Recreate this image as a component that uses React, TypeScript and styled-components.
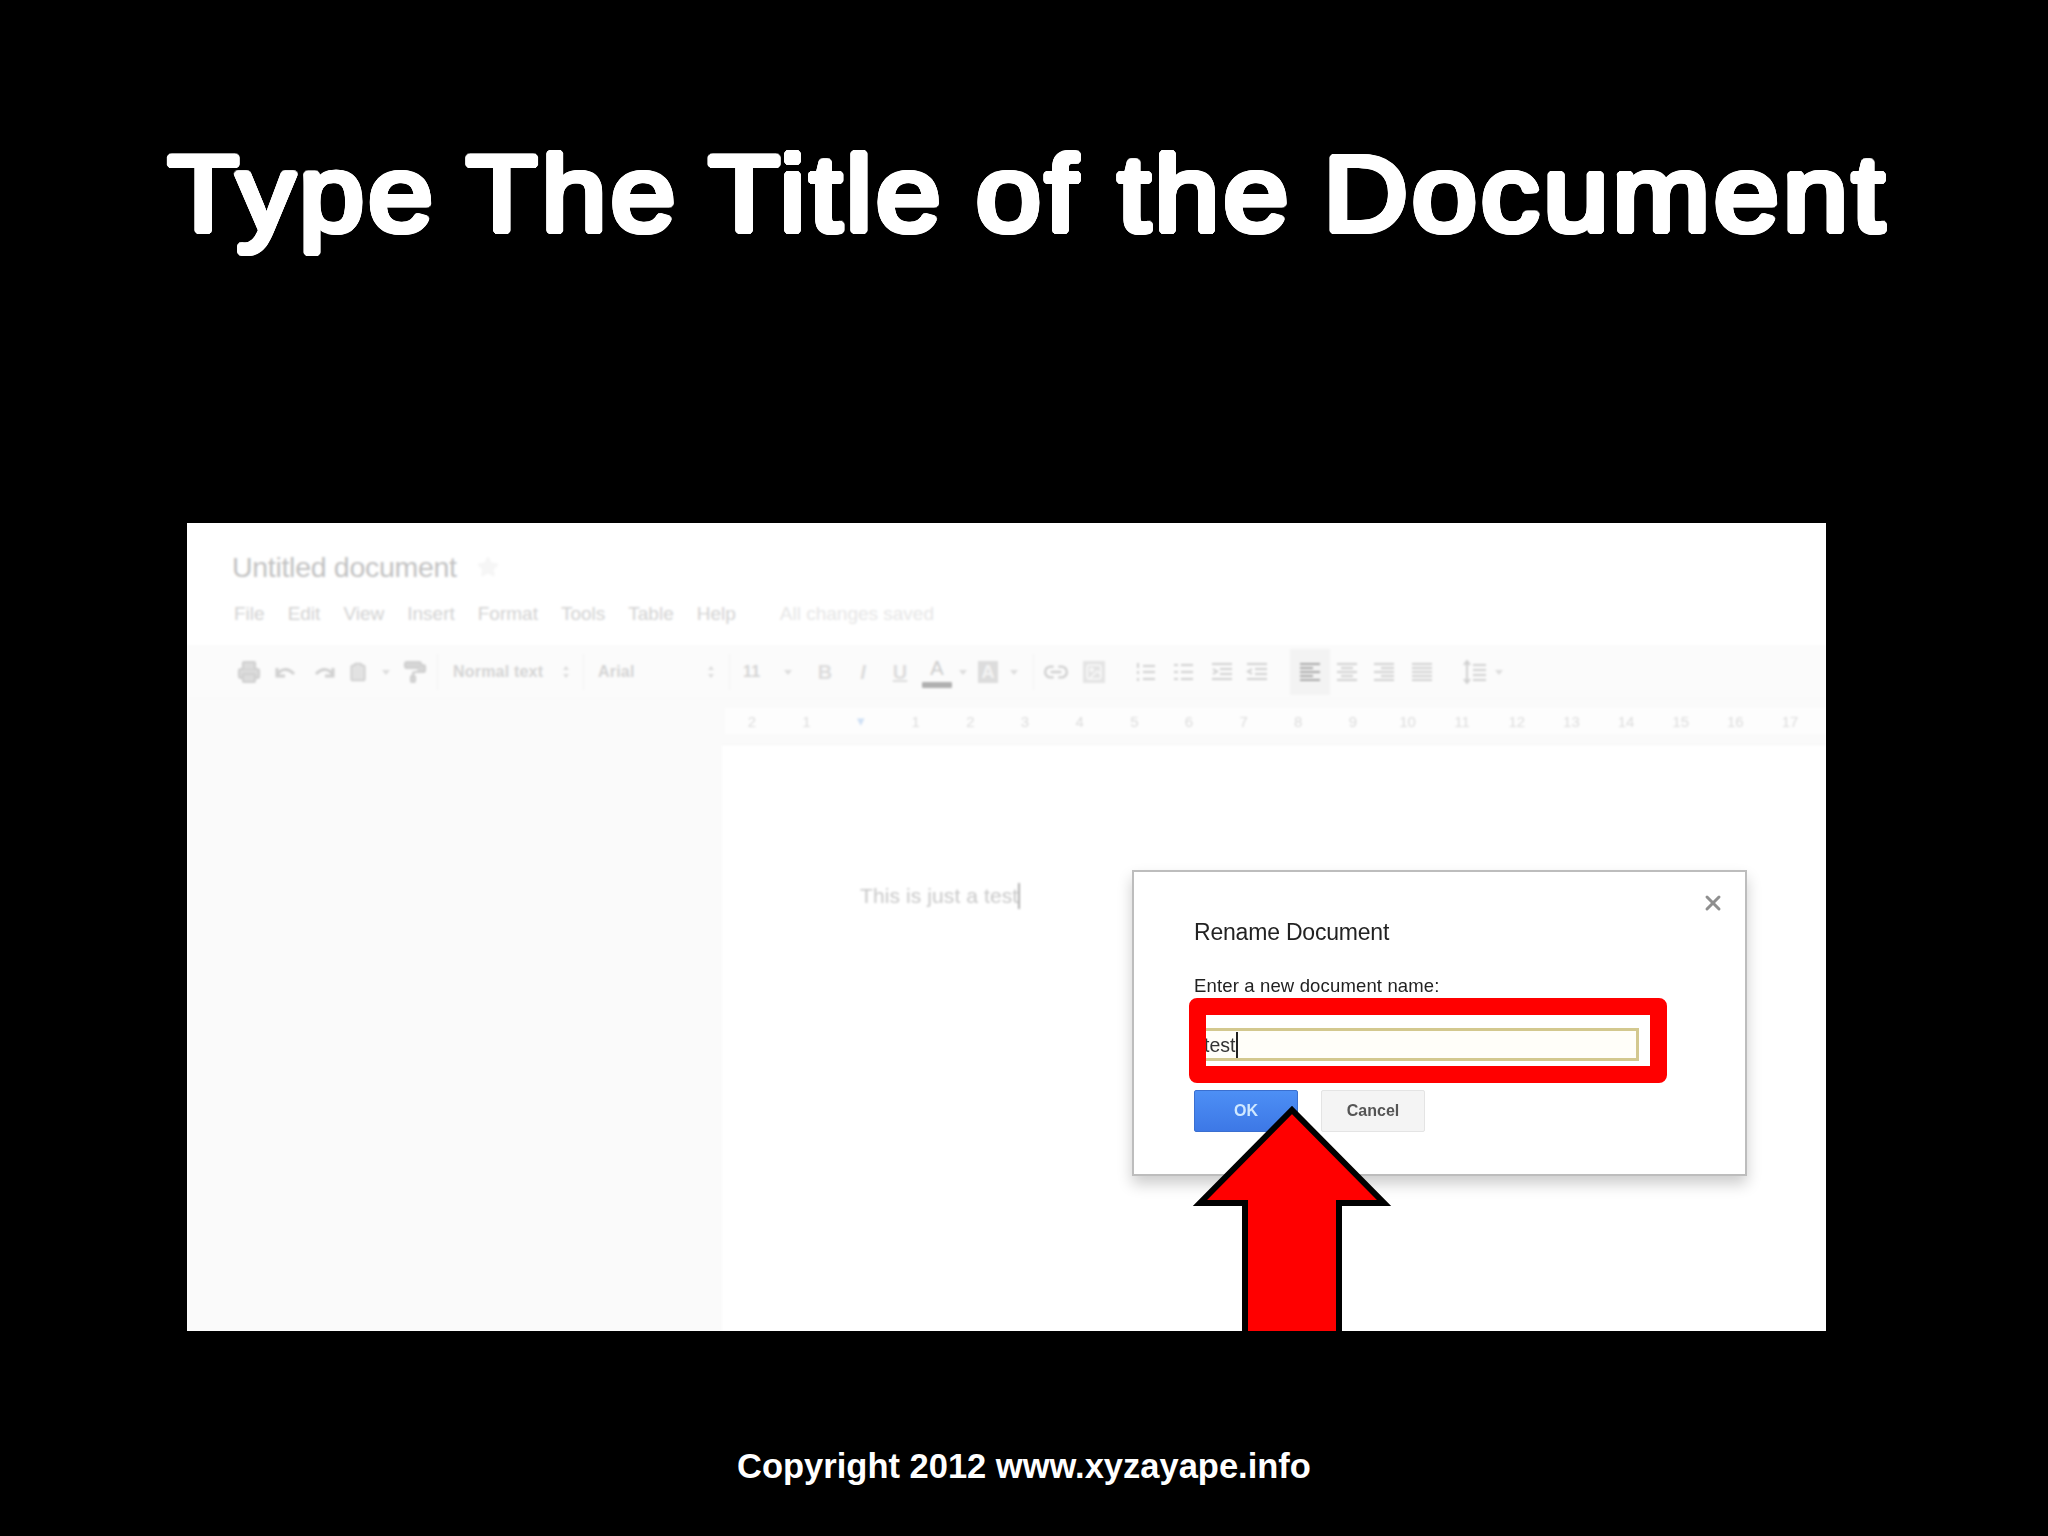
import React from "react";
import styled, { createGlobalStyle } from "styled-components";
import { Printer, Clipboard, PaintRoller, Link2, Image, Star, X } from "lucide-react";

const GlobalStyle = createGlobalStyle`
  html, body {
    margin: 0;
    padding: 0;
    background: #000;
  }
`;

const Slide = styled.div`
  width: 2048px;
  height: 1536px;
  background: #000;
  display: flex;
  flex-direction: column;
  font-family: "Liberation Sans", Arial, sans-serif;
  overflow: hidden;
`;

const TitleArea = styled.div`
  height: 523px;
  padding: 132px 0 0 8px;
  box-sizing: border-box;
  text-align: center;
`;

const roundShadow = Array.from({ length: 16 }, (_, i) => {
  const a = (i / 16) * Math.PI * 2;
  return `${(Math.cos(a) * 3).toFixed(2)}px ${(Math.sin(a) * 3).toFixed(2)}px 0 #fff`;
}).join(", ");

const Title = styled.h1`
  margin: 0;
  font-size: 107px;
  line-height: 124px;
  font-weight: 400;
  color: #fff;
  letter-spacing: 3.6px;
  word-spacing: -5px;
  white-space: nowrap;
  text-shadow: ${roundShadow};
  transform: scaleX(1.094);
`;

const WideWord = styled.span`
  margin-right: 5px;
`;

const Shot = styled.div`
  position: relative;
  margin-left: 187px;
  width: 1639px;
  height: 808px;
  background: #fff;
  overflow: hidden;
`;

const DocLayer = styled.div`
  height: 100%;
  display: flex;
  flex-direction: column;
  filter: blur(0.9px);
`;

const DocHeader = styled.div`
  height: 122px;
  box-sizing: border-box;
  padding: 28px 0 0 45px;
  background: #fff;
`;

const DocTitleRow = styled.div`
  display: flex;
  align-items: center;
  gap: 20px;
  height: 32px;
`;

const DocTitle = styled.div`
  font-size: 28.5px;
  letter-spacing: -0.3px;
  color: #c2c2c2;
`;

const MenuRow = styled.div`
  display: flex;
  align-items: center;
  gap: 23px;
  margin-top: 18px;
  margin-left: 2px;
  height: 26px;
  font-size: 19px;
  color: #d2d2d2;
`;

const SavedNote = styled.span`
  margin-left: 21px;
  color: #e6e6e6;
`;

const Toolbar = styled.div`
  height: 52px;
  box-sizing: border-box;
  padding: 2px 0 0 50px;
  display: flex;
  align-items: center;
  background: #fbfbfb;
  color: #d0d0d0;
`;

const Tool = styled.div<{ $w?: number; $ml?: number; $active?: boolean }>`
  flex: none;
  width: ${(p) => p.$w ?? 24}px;
  height: ${(p) => (p.$active ? 46 : 26)}px;
  margin-left: ${(p) => p.$ml ?? 0}px;
  display: flex;
  align-items: center;
  justify-content: center;
  background: ${(p) => (p.$active ? "#f3f3f3" : "transparent")};
  color: ${(p) => (p.$active ? "#a8a8a8" : "inherit")};
  white-space: nowrap;
`;

const ToolSep = styled.div<{ $ml: number }>`
  flex: none;
  width: 1px;
  height: 36px;
  margin-left: ${(p) => p.$ml}px;
  background: #f2f2f2;
`;

const ToolText = styled(Tool)`
  justify-content: flex-start;
  font-size: 16px;
  letter-spacing: 0.2px;
  font-weight: 700;
  color: #d4d4d4;
`;

const Caret = styled(Tool)`
  font-size: 0;
  &::after {
    content: "";
    border-left: 4px solid transparent;
    border-right: 4px solid transparent;
    border-top: 5px solid #dcdcdc;
  }
`;

const Spinner = styled(Tool)`
  flex-direction: column;
  gap: 4px;
  &::before {
    content: "";
    border-left: 3px solid transparent;
    border-right: 3px solid transparent;
    border-bottom: 4px solid #dcdcdc;
  }
  &::after {
    content: "";
    border-left: 3px solid transparent;
    border-right: 3px solid transparent;
    border-top: 4px solid #dcdcdc;
  }
`;

const Glyph = styled(Tool)<{ $italic?: boolean; $underline?: boolean }>`
  font-size: 20px;
  font-weight: 700;
  font-style: ${(p) => (p.$italic ? "italic" : "normal")};
  text-decoration: ${(p) => (p.$underline ? "underline" : "none")};
  color: #dcdcdc;
`;

const ColorA = styled(Tool)`
  flex-direction: column;
  height: 36px;
  font-size: 20px;
  color: #cccccc;
  &::after {
    content: "";
    width: 30px;
    height: 6px;
    margin-top: 2px;
    background: #b0b0b0;
    border-radius: 1px;
    flex: none;
  }
`;

const FillA = styled(Tool)`
  background: #dcdcdc;
  height: 22px;
  font-size: 18px;
  font-weight: 700;
  color: #f4f4f4;
`;

const ImageBox = styled(Tool)`
  height: 22px;
  background: #e4e4e4;
  color: #fbfbfb;
`;

const Workspace = styled.div`
  flex: 1;
  display: flex;
  min-height: 0;
`;

const Sidebar = styled.div`
  width: 535px;
  flex: none;
  background: #fafafa;
`;

const PageColumn = styled.div`
  flex: 1;
  display: flex;
  flex-direction: column;
`;

const RulerStrip = styled.div`
  height: 48px;
  box-sizing: border-box;
  padding: 11px 0 0 2.5px;
  background: #fafafa;
  border-bottom: 1px solid #f6f6f6;
`;

const Ruler = styled.div`
  display: grid;
  grid-template-columns: repeat(20, 54.65px);
  height: 26px;
  background: #fdfdfd;
  align-items: center;
  font-size: 15px;
  color: #dcdcdc;
  text-align: center;
`;

const RulerCell = styled.span<{ $marker?: boolean }>`
  color: ${(p) => (p.$marker ? "#cfe0f5" : "inherit")};
`;

const Page = styled.div`
  flex: 1;
  background: #fff;
  padding: 137px 0 0 138px;
`;

const DocText = styled.div`
  display: inline-flex;
  align-items: center;
  height: 28px;
  font-size: 21px;
  letter-spacing: 0.1px;
  color: #c8c8c8;
  &::after {
    content: "";
    width: 2px;
    height: 26px;
    background: #b0b0b0;
  }
`;

const Dialog = styled.div`
  position: absolute;
  left: 945px;
  top: 347px;
  width: 615px;
  height: 306px;
  box-sizing: border-box;
  padding: 44px 0 0 60px;
  background: #fff;
  border: 2px solid #bdbdbd;
  box-shadow: 0 8px 14px rgba(0, 0, 0, 0.2);
  filter: blur(0.35px);
`;

const CloseButton = styled.div`
  position: absolute;
  right: 20px;
  top: 19px;
  color: #8f8f8f;
  display: flex;
`;

const DialogTitle = styled.div`
  font-size: 23px;
  line-height: 32px;
  letter-spacing: -0.2px;
  color: #222;
`;

const DialogLabel = styled.div`
  margin-top: 27px;
  font-size: 18.5px;
  line-height: 22px;
  letter-spacing: 0.15px;
  color: #222;
`;

const Highlight = styled.div`
  box-sizing: border-box;
  width: 478px;
  height: 85px;
  margin: 1px 0 0 -5px;
  padding: 13px 11px 5px 0;
  border: 17px solid #ff0000;
  border-radius: 8px;
  background: #fff;
  overflow: hidden;
`;

const NameInput = styled.div`
  box-sizing: border-box;
  height: 33px;
  padding-top: 1px;
  display: flex;
  align-items: center;
  background: #fffef9;
  border: 3px solid #d3c88f;
  border-left: none;
  font-size: 19.5px;
  margin-left: -2px;
  color: #333;
  &::after {
    content: "";
    width: 2px;
    height: 26px;
    background: #222;
    margin-left: 1px;
  }
`;

const ButtonRow = styled.div`
  display: flex;
  gap: 23px;
  margin-top: 7px;
`;

const DialogButton = styled.div<{ $primary?: boolean }>`
  box-sizing: border-box;
  width: 104px;
  height: 42px;
  display: flex;
  align-items: center;
  justify-content: center;
  font-size: 16px;
  font-weight: 700;
  border-radius: 2px;
  color: ${(p) => (p.$primary ? "#cfe8ff" : "#555")};
  background: ${(p) =>
    p.$primary ? "linear-gradient(#4d8ff5, #3d78e6)" : "#f4f4f4"};
  border: 1px solid ${(p) => (p.$primary ? "#3a6fd0" : "#e4e4e4")};
`;

const ArrowMark = styled.svg`
  position: absolute;
  left: 993px;
  top: 577px;
  width: 220px;
  height: 240px;
`;

const FooterArea = styled.div`
  flex: 1;
  padding-top: 115px;
  text-align: center;
`;

const Copyright = styled.div`
  font-size: 34.5px;
  line-height: 40px;
  font-weight: 700;
  color: #fff;
`;

// docs toolbar icons, denser than what the icon packages have
const Ruled = ({ d, sw = 2 }: { d: string; sw?: number }) => (
  <svg width="24" height="24" viewBox="0 0 24 24" fill="none" stroke="currentColor" strokeWidth={sw}>
    <path d={d} />
  </svg>
);

const icons = {
  undo: "M4 8v8h8M4 15 C8 8 15 8 21 14",
  redo: "M20 8v8h-8M20 15 C16 8 9 8 3 14",
  ordered: "M5 3v5M5 11v3M5 18v3M10 6h12M10 12h12M10 19h12",
  bullets: "M3 5h4M3 12h4M3 19h4M10 5h12M10 12h12M10 19h12",
  indent: "M2 4h20M10 9h12M10 14h12M2 19h20M3 9l4 2.5-4 2.5",
  outdent: "M2 4h20M10 9h12M10 14h12M2 19h20M7 9l-4 2.5 4 2.5",
  left: "M2 4h20M2 8h13M2 12h20M2 16h13M2 20h20",
  center: "M2 4h20M6 8h12M2 12h20M6 16h12M2 20h20",
  right: "M2 4h20M9 8h13M2 12h20M9 16h13M2 20h20",
  justify: "M2 4h20M2 8h20M2 12h20M2 16h20M2 20h20",
  spacing: "M4 2v20M1 5l3-4 3 4M1 19l3 4 3-4M10 5h13M10 10h13M10 15h13M10 20h13",
};

const menus = ["File", "Edit", "View", "Insert", "Format", "Tools", "Table", "Help"];
const ruler = ["2", "1", "▾", "1", "2", "3", "4", "5", "6", "7", "8", "9", "10", "11", "12", "13", "14", "15", "16", "17"];

export default function App() {
  return (
    <Slide>
      <GlobalStyle />
      <TitleArea>
        <Title>
          Type The Title <WideWord>of</WideWord> the Document
        </Title>
      </TitleArea>
      <Shot>
        <DocLayer>
          <DocHeader>
            <DocTitleRow>
              <DocTitle>Untitled document</DocTitle>
              <Star size={22} color="#f6f6f6" fill="#f6f6f6" />
            </DocTitleRow>
            <MenuRow>
              {menus.map((m) => (
                <span key={m}>{m}</span>
              ))}
              <SavedNote>All changes saved</SavedNote>
            </MenuRow>
          </DocHeader>
          <Toolbar>
            <Tool><Printer size={24} strokeWidth={2.2} fill="#dcdcdc" /></Tool>
            <Tool $ml={12}><Ruled d={icons.undo} sw={3} /></Tool>
            <Tool $ml={16}><Ruled d={icons.redo} sw={3} /></Tool>
            <Tool $w={20} $ml={11}><Clipboard size={24} strokeWidth={2.2} fill="#e2e2e2" /></Tool>
            <Caret $w={10} $ml={13} />
            <Tool $ml={12}><PaintRoller size={24} strokeWidth={2.2} fill="#d6d6d6" /></Tool>
            <ToolSep $ml={10} />
            <ToolText $w={90} $ml={15}>Normal text</ToolText>
            <Spinner $w={8} $ml={19} />
            <ToolSep $ml={13} />
            <ToolText $w={40} $ml={14}>Arial</ToolText>
            <Spinner $w={8} $ml={69} />
            <ToolSep $ml={14} />
            <ToolText $w={16} $ml={13}>11</ToolText>
            <Caret $w={10} $ml={24} />
            <Glyph $w={20} $ml={22}>B</Glyph>
            <Glyph $w={20} $ml={18} $italic>I</Glyph>
            <Glyph $w={20} $ml={17} $underline>U</Glyph>
            <ColorA $w={30} $ml={12}>A</ColorA>
            <Caret $w={10} $ml={6} />
            <FillA $w={20} $ml={10}>A</FillA>
            <Caret $w={10} $ml={11} />
            <ToolSep $ml={14} />
            <Tool $w={26} $ml={9}><Link2 size={28} strokeWidth={2.2} /></Tool>
            <ImageBox $w={22} $ml={14}><Image size={18} /></ImageBox>
            <Tool $ml={28}><Ruled d={icons.ordered} /></Tool>
            <Tool $ml={14}><Ruled d={icons.bullets} /></Tool>
            <Tool $ml={15}><Ruled d={icons.indent} /></Tool>
            <Tool $ml={11}><Ruled d={icons.outdent} /></Tool>
            <Tool $w={40} $ml={21} $active><Ruled d={icons.left} /></Tool>
            <Tool $ml={5}><Ruled d={icons.center} /></Tool>
            <Tool $ml={13}><Ruled d={icons.right} /></Tool>
            <Tool $ml={14}><Ruled d={icons.justify} /></Tool>
            <Tool $ml={29}><Ruled d={icons.spacing} /></Tool>
            <Caret $w={10} $ml={7} />
          </Toolbar>
          <Workspace>
            <Sidebar />
            <PageColumn>
              <RulerStrip>
                <Ruler>
                  {ruler.map((n, i) => (
                    <RulerCell key={i} $marker={i === 2}>{n}</RulerCell>
                  ))}
                </Ruler>
              </RulerStrip>
              <Page>
                <DocText>This is just a test</DocText>
              </Page>
            </PageColumn>
          </Workspace>
        </DocLayer>
        <Dialog>
          <CloseButton><X size={24} strokeWidth={3} /></CloseButton>
          <DialogTitle>Rename Document</DialogTitle>
          <DialogLabel>Enter a new document name:</DialogLabel>
          <Highlight>
            <NameInput>test</NameInput>
          </Highlight>
          <ButtonRow>
            <DialogButton $primary>OK</DialogButton>
            <DialogButton>Cancel</DialogButton>
          </ButtonRow>
        </Dialog>
        <ArrowMark viewBox="0 0 220 240">
          <path
            d="M112 10 L204 103 H159 V250 H65 V103 H20 Z"
            fill="#ff0000"
            stroke="#000"
            strokeWidth="6"
            strokeMiterlimit="10"
          />
        </ArrowMark>
      </Shot>
      <FooterArea>
        <Copyright>Copyright 2012 www.xyzayape.info</Copyright>
      </FooterArea>
    </Slide>
  );
}
